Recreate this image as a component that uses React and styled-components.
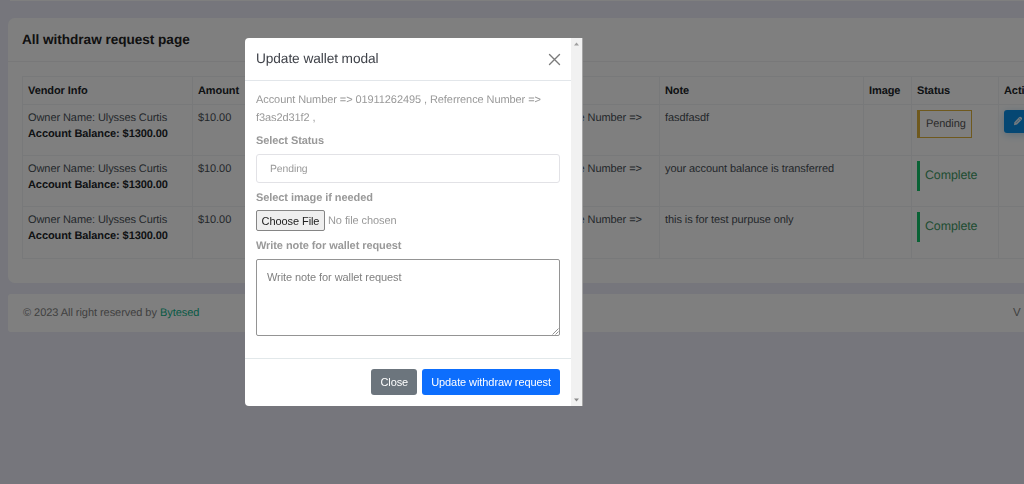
import React from 'react';
import styled, { createGlobalStyle } from 'styled-components';

const GlobalStyle = createGlobalStyle`
    * {
        box-sizing: border-box;
    }
    html, body {
        margin: 0;
        height: 100%;
        overflow: hidden;
    }
    body {
        background-color: #ecedf8;
        font-family: "Liberation Sans", Arial, sans-serif;
        font-size: 11px;
        letter-spacing: -0.08px;
        line-height: 16px;
        color: #444;
        text-rendering: geometricPrecision;
    }
`;

const Page = styled.div`
    width: 100%;
    padding-left: 8px;
    overflow: hidden;
`;

const TopCard = styled.div`
    height: 1px;
    margin-left: 2px;
    background-color: #fff;
`;

const Card = styled.section`
    height: 265px;
    margin-top: 17px;
    background-color: #fff;
    border-radius: 7px 0 0 7px;
`;

const CardHeader = styled.header`
    height: 44px;
    padding: 13px 14px 0 14px;
    border-bottom: 1px solid #f0f1f3;
`;

const CardTitle = styled.h4`
    margin: 0;
    font-size: 13.6px;
    letter-spacing: -0.03px;
    line-height: 18px;
    color: #222;
`;

const CardBody = styled.div`
    padding: 14px 0 0 14px;
`;

const Table = styled.table`
    width: 1063px;
    table-layout: fixed;
    border-collapse: collapse;
`;

const Th = styled.th`
    width: ${({ $width }) => $width}px;
    height: 28px;
    padding: 0 5px;
    border: 1px solid #f1f2f5;
    text-align: left;
    color: #212529;
`;

const Td = styled.td`
    height: ${({ $height }) => $height}px;
    padding: 5px;
    border: 1px solid #f1f2f5;
    vertical-align: top;
    color: #495057;
`;

const Line = styled.div`
    font-weight: ${({ $bold }) => ($bold ? 700 : 400)};
    color: ${({ $bold }) => ($bold ? '#212529' : 'inherit')};
`;

const PendingBadge = styled.span`
    display: inline-block;
    height: 28px;
    padding: 6px 5px 0 6px;
    border: 1px solid #dfb23c;
    border-left-width: 3px;
    line-height: 15px;
    color: #555;
`;

const CompleteBadge = styled.span`
    display: inline-block;
    height: 30px;
    padding: 0 5px;
    border-left: 3px solid #13c56b;
    font-size: 12.4px;
    line-height: 29px;
    color: #3f9a65;
`;

const EditButton = styled.button`
    display: flex;
    align-items: center;
    height: 23px;
    width: 29px;
    padding: 0 9px 2px 9px;
    border: none;
    border-radius: 3px;
    background-color: #0a8fe6;
    box-shadow: 0 2px 8px #b9d9ef;
`;

const Footer = styled.footer`
    display: flex;
    justify-content: space-between;
    height: 38px;
    margin-top: 11px;
    padding-left: 15px;
    background-color: #fff;
    border-radius: 3px 0 0 3px;
    line-height: 38px;
    letter-spacing: -0.05px;
    color: #828282;
`;

const FooterLink = styled.a`
    color: #12b48c;
`;

const Version = styled.span`
    width: 11px;
    font-size: 11.5px;
`;

const Backdrop = styled.div`
    position: fixed;
    inset: 0;
    display: flex;
    align-items: flex-start;
    padding: 38px 0 0 245px;
    background-color: rgba(0, 0, 0, 0.5);
`;

const Modal = styled.div`
    display: flex;
    width: 338px;
    height: 368px;
    overflow: hidden;
    border-radius: 4px 0 0 4px;
    border-right: 1px solid #a5a5a5;
    background-color: #fff;
    color: #999;
`;

const ModalContent = styled.div`
    flex: 1;
    display: flex;
    flex-direction: column;
`;

const ModalHeader = styled.div`
    display: flex;
    align-items: center;
    justify-content: space-between;
    height: 43px;
    padding: 0 10px 0 11px;
    border-bottom: 1px solid #e2e6ea;
`;

const ModalTitle = styled.h5`
    margin: 0;
    font-size: 13.7px;
    font-weight: 400;
    color: #3f4249;
`;

const CloseIcon = styled.svg`
    display: block;
    width: 13px;
    height: 13px;
`;

const ModalBody = styled.div`
    flex: 1;
    display: flex;
    flex-direction: column;
    align-items: flex-start;
    padding: 11px 11px 0 11px;
`;

const Details = styled.p`
    margin: 0;
    line-height: 17.5px;
`;

const Label = styled.label`
    font-weight: 700;
    line-height: 16px;
    margin-top: ${({ $top }) => $top}px;
    margin-bottom: ${({ $bottom }) => $bottom}px;
`;

const SelectBox = styled.div`
    width: 100%;
    height: 29px;
    padding: 6px 13px;
    border: 1px solid #e2e2e6;
    border-radius: 3px;
    font-size: 10.4px;
`;

/* the fixed control height cuts off descenders */
const SelectValue = styled.div`
    height: 13px;
    overflow: hidden;
    line-height: 17px;
`;

const FileRow = styled.div`
    display: flex;
    align-items: center;
    gap: 3px;
`;

const FileButton = styled.button`
    width: 69px;
    height: 21px;
    padding: 0;
    border: 1px solid #858585;
    border-radius: 2px;
    background-color: #efefef;
    font: inherit;
    letter-spacing: inherit;
    color: #222;
`;

const NoteWrap = styled.div`
    position: relative;
    width: 100%;
    height: 77px;
`;

const Note = styled.textarea`
    display: block;
    width: 100%;
    height: 100%;
    padding: 9px 10px;
    border: 1px solid #949494;
    border-radius: 2px;
    resize: none;
    font: inherit;
    letter-spacing: inherit;
    &::placeholder {
        color: #808080;
    }
`;

const Grip = styled.svg`
    position: absolute;
    right: 1px;
    bottom: 1px;
    width: 7px;
    height: 7px;
`;

const ModalFooter = styled.div`
    display: flex;
    justify-content: flex-end;
    gap: 5px;
    height: 48px;
    padding: 10px 11px 0 0;
    border-top: 1px solid #e2e8ea;
`;

const Button = styled.button`
    height: 26px;
    padding: 0 9px;
    border: none;
    border-radius: 3px;
    background-color: ${({ $primary }) => ($primary ? '#0d6efd' : '#6c757d')};
    font: inherit;
    letter-spacing: inherit;
    color: #fff;
    white-space: nowrap;
`;

const Scrollbar = styled.div`
    display: flex;
    flex-direction: column;
    justify-content: space-between;
    align-items: center;
    width: 11px;
    padding: 4px 0;
    background-color: #f1f1f1;
`;

const Arrow = styled.svg`
    display: block;
    width: 5px;
    height: 4px;
`;

const columns = [
    { title: 'Vendor Info', width: 170 },
    { title: 'Amount', width: 53 },
    { title: '', width: 106 },
    { title: '', width: 308 },
    { title: 'Note', width: 204 },
    { title: 'Image', width: 48 },
    { title: 'Status', width: 87 },
    { title: 'Action', width: 86 },
];

const requests = [
    { note: 'fasdfasdf', status: 'pending', height: 51 },
    { note: 'your account balance is transferred', status: 'complete', height: 51 },
    { note: 'this is for test purpuse only', status: 'complete', height: 52 },
];

function RequestRow({ note, status, height }) {
    return (
        <tr>
            <Td $height={height}>
                <Line>Owner Name: Ulysses Curtis</Line>
                <Line $bold>Account Balance: $1300.00</Line>
            </Td>
            <Td>$10.00</Td>
            <Td></Td>
            <Td>Account Number =&gt; 01911262495 , Referrence Number =&gt; f3as2d31f2 ,</Td>
            <Td>{note}</Td>
            <Td></Td>
            <Td>
                {status === 'pending'
                    ? <PendingBadge>Pending</PendingBadge>
                    : <CompleteBadge>Complete</CompleteBadge>}
            </Td>
            <Td>
                {status === 'pending' && (
                    <EditButton aria-label="Edit">
                        <svg width="10" height="10" viewBox="0 0 10 10">
                            <path d="M1 9.2 L1.4 6.2 L6 1.2 Q7.2 0.2 8.4 1.2 Q9.6 2.4 8.7 3.7 L4 8.6 Z" fill="#e6f3fc" />
                            <path d="M2.8 7 L6.2 3.6 M6 1.8 L8.2 4" stroke="#0a8fe6" strokeWidth="0.5" />
                        </svg>
                    </EditButton>
                )}
            </Td>
        </tr>
    );
}

function WalletModal() {
    return (
        <Backdrop>
            <Modal>
                <ModalContent>
                    <ModalHeader>
                        <ModalTitle>Update wallet modal</ModalTitle>
                        <CloseIcon viewBox="0 0 13 13">
                            <path d="M1.5 1.5 L11.5 11.5 M11.5 1.5 L1.5 11.5" stroke="#7b7b7b" strokeWidth="1.4" strokeLinecap="round" />
                        </CloseIcon>
                    </ModalHeader>
                    <ModalBody>
                        <Details>Account Number =&gt; 01911262495 , Referrence Number =&gt; f3as2d31f2 ,</Details>
                        <Label $top={6} $bottom={5}>Select Status</Label>
                        <SelectBox>
                            <SelectValue>Pending</SelectValue>
                        </SelectBox>
                        <Label $top={7} $bottom={4}>Select image if needed</Label>
                        <FileRow>
                            <FileButton>Choose File</FileButton>
                            <span>No file chosen</span>
                        </FileRow>
                        <Label $top={7} $bottom={5}>Write note for wallet request</Label>
                        <NoteWrap>
                            <Note placeholder="Write note for wallet request" />
                            <Grip viewBox="0 0 7 7">
                                <path d="M0.5 6.5 L6.5 0.5 M3.5 6.5 L6.5 3.5" stroke="#777" strokeWidth="0.8" />
                            </Grip>
                        </NoteWrap>
                    </ModalBody>
                    <ModalFooter>
                        <Button>Close</Button>
                        <Button $primary>Update withdraw request</Button>
                    </ModalFooter>
                </ModalContent>
                <Scrollbar>
                    <Arrow viewBox="0 0 5 4"><path d="M0 3.5 L2.5 0.5 L5 3.5 Z" fill="#a0a0a0" /></Arrow>
                    <Arrow viewBox="0 0 5 4"><path d="M0 0.5 L2.5 3.5 L5 0.5 Z" fill="#8c8c8c" /></Arrow>
                </Scrollbar>
            </Modal>
        </Backdrop>
    );
}

export default function App() {
    return (
        <>
            <GlobalStyle />
            <Page>
                <TopCard />
                <Card>
                    <CardHeader>
                        <CardTitle>All withdraw request page</CardTitle>
                    </CardHeader>
                    <CardBody>
                        <Table>
                            <thead>
                                <tr>
                                    {columns.map((column, i) => (
                                        <Th key={i} $width={column.width}>{column.title}</Th>
                                    ))}
                                </tr>
                            </thead>
                            <tbody>
                                {requests.map((request) => (
                                    <RequestRow key={request.note} {...request} />
                                ))}
                            </tbody>
                        </Table>
                    </CardBody>
                </Card>
                <Footer>
                    <span>© 2023 All right reserved by <FooterLink>Bytesed</FooterLink></span>
                    <Version>V</Version>
                </Footer>
            </Page>
            <WalletModal />
        </>
    );
}
